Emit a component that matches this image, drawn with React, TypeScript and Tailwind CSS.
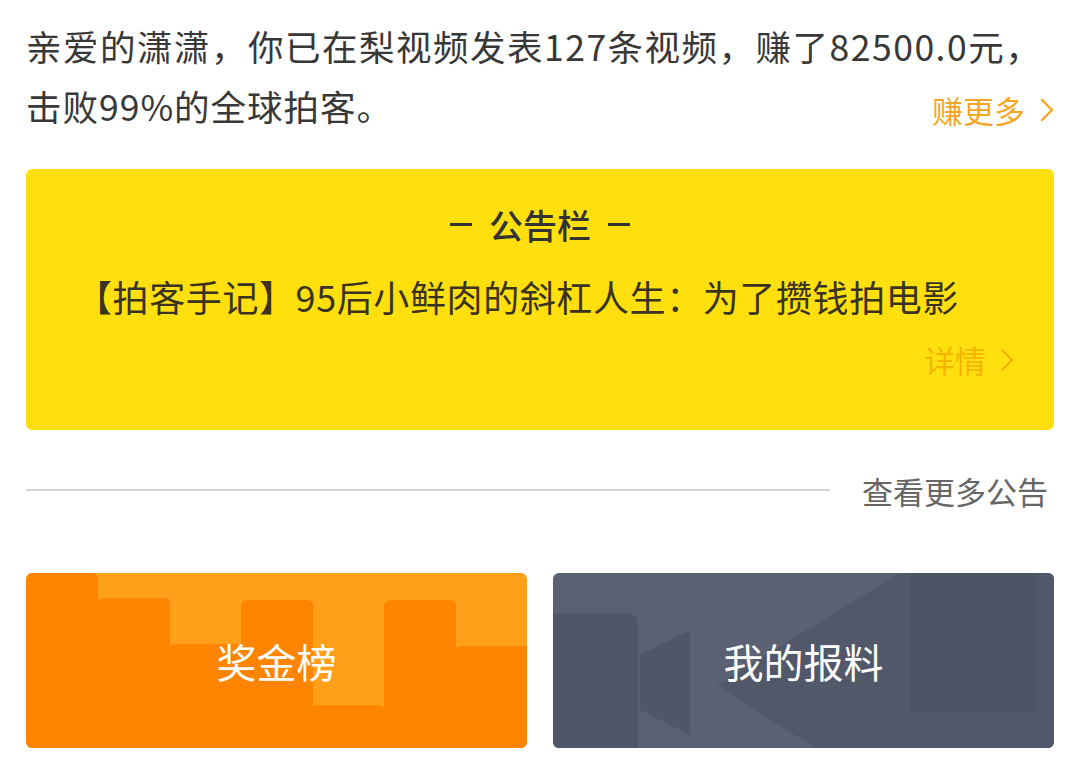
const font = "font-['Noto_Sans_CJK_SC','Noto_Sans',sans-serif]";

const Chevron = ({ className }: { className?: string }) => (
  <svg viewBox="0 0 14 24" className={className} fill="none">
    <polyline points="2,2 12,12 2,22" stroke="currentColor" strokeWidth="2.4" strokeLinecap="round" strokeLinejoin="round" />
  </svg>
);

const bars = [
  { x: 0, y: 0 },
  { x: 72, y: 25 },
  { x: 143, y: 71 },
  { x: 215, y: 27 },
  { x: 286, y: 132 },
  { x: 358, y: 27 },
  { x: 429, y: 73 },
];

const BonusCard = () => (
  <div className="relative h-[175px] flex-1 overflow-hidden rounded-[6px] bg-[#ff9f1a]">
    <svg className="absolute inset-0 h-full w-full" viewBox="0 0 501 175" preserveAspectRatio="none">
      {bars.map((b, i) => (
        <rect key={i} x={b.x} y={b.y} width={i === 6 ? 80 : 72} height={200} rx={6} fill="#ff8400" />
      ))}
    </svg>
    <div className="relative flex h-full items-center justify-center text-[40px] leading-none text-white">
      奖金榜
    </div>
  </div>
);

const ReportCard = () => (
  <div className="relative h-[175px] flex-1 overflow-hidden rounded-[6px] bg-[#5a6173]">
    <svg className="absolute inset-0 h-full w-full" viewBox="0 0 501 175" preserveAspectRatio="none">
      <path d="M0 40 H73 Q85 40 85 52 V175 H0 Z" fill="#4f5667" />
      <polygon points="87,82 137,57 137,162 87,137" fill="#4f5667" />
      <polygon points="164,112 347,0 501,0 501,175 262,175" fill="#515869" />
      <rect x="357" y="0" width="127" height="140" fill="#4d5465" />
    </svg>
    <div className="relative flex h-full items-center justify-center text-[40px] leading-none text-white">
      我的报料
    </div>
  </div>
);

export default function App() {
  return (
    <div className={`${font} min-h-[763px] w-[1080px] bg-white px-[26px] pt-[16px] text-[#383838]`}>
      <div className="text-[35.5px] leading-[60px] tracking-[1.5px] whitespace-nowrap">
        亲爱的潇潇，你已在梨视频发表127条视频，赚了82500.0元，
      </div>
      <div className="flex items-center justify-between">
        <span className="text-[35.5px] leading-[60px] tracking-[1px]">击败99%的全球拍客。</span>
        <span className="mt-[8px] flex items-center gap-[15px] text-[31px] leading-[40px] text-[#f5a623]">
          赚更多
          <Chevron className="h-[24px] w-[14px]" />
        </span>
      </div>

      <div className="mt-[33px] h-[261px] rounded-[6px] bg-[#ffe00e] pt-[35px]">
        <div className="flex h-[40px] items-center justify-center gap-[17px] text-[34px] font-medium text-[#333]">
          <span className="h-[3px] w-[22px] bg-[#333]" />
          <span>公告栏</span>
          <span className="h-[3px] w-[22px] bg-[#333]" />
        </div>
        <div className="mt-[30px] pl-[50px] text-[36px] leading-[44px] tracking-[0.6px] whitespace-nowrap text-[#3a3320]">
          【拍客手记】95后小鲜肉的斜杠人生：为了攒钱拍电影
        </div>
        <div className="mt-[22px] flex h-[40px] items-center justify-end gap-[14px] pr-[40px] text-[31px] text-[#f5b400]">
          详情
          <Chevron className="h-[24px] w-[14px]" />
        </div>
      </div>

      <div className="mt-[40px] flex h-[40px] items-center gap-[32px] pr-[6px]">
        <div className="h-[2px] flex-1 bg-[#d6d6d6]" />
        <span className="text-[31px] leading-none text-[#666]">查看更多公告</span>
      </div>

      <div className="mt-[63px] flex gap-[26px]">
        <BonusCard />
        <ReportCard />
      </div>
    </div>
  );
}
